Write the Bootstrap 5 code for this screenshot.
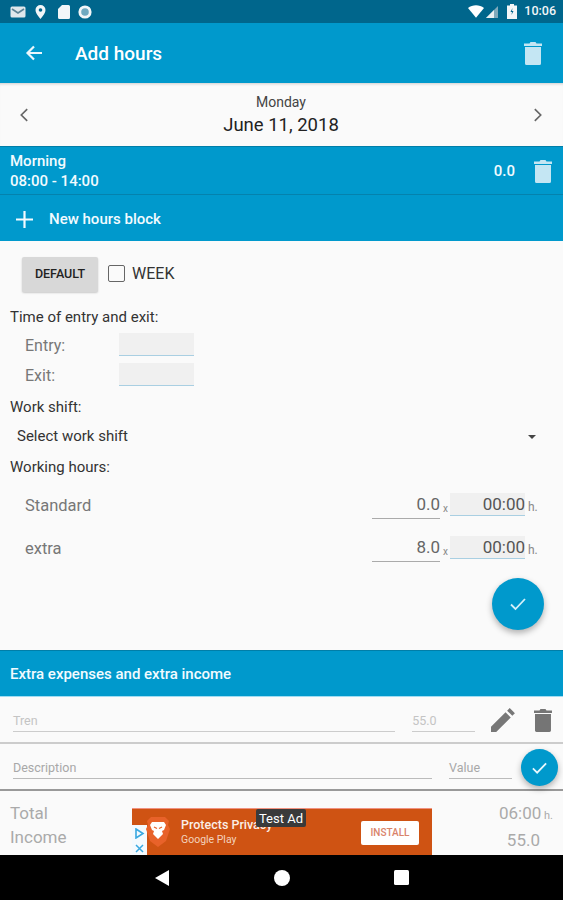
<!DOCTYPE html>
<html lang="en">
<head>
<meta charset="utf-8">
<title>Add hours</title>
<link href="https://cdn.jsdelivr.net/npm/bootstrap@5.3.0/dist/css/bootstrap.min.css" rel="stylesheet">
<style>
html,body{margin:0;background:#fafafa;}
body{font-family:Roboto,"Liberation Sans",sans-serif;color:#333;}
.screen{width:563px;height:900px;overflow:hidden;background:#fafafa;position:relative;}
.statusbar{height:23px;background:#00668c;color:#f2f6f8;padding:0 7px 0 10px;font-size:12.5px;font-weight:500;}
.statusbar svg{display:block;}
.left-icons{gap:9px;}
.ic-sd{margin-left:3px;}
.ic-dot{margin-left:-1px;}
.ic-signal{margin-left:2px;}
.ic-batt{margin-left:9px;}
.clock-text{margin-left:7px;}
.toolbar{height:60px;background:#0099cc;color:#fff;padding:0 21px 0 25px;}
.toolbar-title{font-size:19px;font-weight:500;margin-left:32px;margin-top:3px;}
.datebar{height:63px;padding:0 20px 0 19px;box-shadow:inset 0 3px 3px -2px rgba(0,0,0,.18);}
.day{font-size:14px;color:#444;line-height:16px;margin-top:2px;}
.date{font-size:18.5px;color:#222;line-height:24px;margin-top:3px;}
.band{background:#0099cc;color:#f2fbff;}
.band-block{height:49px;padding:0 11px 0 10px;border-top:1px solid #007ea8;border-bottom:1px solid #0482ad;}
.block-name{font-size:15px;line-height:20px;font-weight:500;}
.trash-block{margin-left:19px;}
.band-new{height:46px;padding:2px 0 0 15px;font-size:15px;font-weight:500;}
.new-label{margin-left:15px;}
.form-zone{height:409px;padding:16px 0 0 10px;position:relative;}
.default-btn{width:76px;height:35px;margin-left:12px;background:#d8d8d8;border:0;border-radius:2px;font-size:12.5px;font-weight:500;color:#222;padding:0;box-shadow:0 1px 2px rgba(0,0,0,.2);}
.week-box{width:17px;height:17px;border:1.5px solid #666;border-radius:2px;margin:-3px 0 0 10px;}
.week{font-size:16px;color:#333;margin:-2px 0 0 7px;}
.lab{font-size:15px;line-height:18px;color:#333;}
.lab-time{margin-top:16px;}
.lab-shift{margin-top:8px;}
.lab-hours{margin-top:6px;}
.time-row{height:30px;padding-left:15px;}
.time-row-first{margin-top:4px;}
.time-name{font-size:16px;color:#777;width:94px;margin-top:2px;}
.time-input{width:75px;height:23px;background:#f0f0f0;border-bottom:1.5px solid #a9cfe2;margin-top:-1px;}
.shift-row{height:31px;padding:0 27px 0 7px;font-size:15px;color:#333;margin-top:5px;}
.caret-down{width:0;height:0;border-left:4.5px solid transparent;border-right:4.5px solid transparent;border-top:4.5px solid #444;}
.hours-row{height:43px;padding:0 24px 0 15px;font-size:16.5px;color:#777;}
.hours-first{margin-top:8px;}
.hours-name{margin-top:2px;}
.num{width:68px;text-align:right;border-bottom:1.5px solid #aaa;color:#666;font-size:17px;line-height:22px;padding-bottom:3px;margin-top:1px;}
.mult{width:10px;font-size:10px;color:#888;padding-left:3px;padding-top:5px;}
.clock{width:75px;height:23px;background:#f0f0f0;border-bottom:1.5px solid #a9cfe2;text-align:right;font-size:17px;line-height:22px;color:#555;margin-top:-2px;}
.unit{width:14px;font-size:12px;color:#888;padding-left:3px;padding-top:3px;}
.fab{position:absolute;border-radius:50%;background:#0099cc;box-shadow:0 3px 6px rgba(0,0,0,.3);display:flex;align-items:center;justify-content:center;}
.fab-main{width:52px;height:52px;right:19px;top:337px;}
.band-extra{height:47px;padding:2px 0 0 10px;font-size:15px;font-weight:500;border-top:1px solid #007ea8;border-bottom:1px solid #9fdcf2;}
.entry-row{height:47px;padding:0 11px 0 13px;border-bottom:2px solid #ccc;font-size:12.5px;color:#c4c4c4;}
.entry-row-b{border-bottom-color:#999;color:#a8a8a8;position:relative;}
.field{border-bottom:1.5px solid #ccc;height:21px;line-height:19px;margin-top:3px;}
.entry-row-b .field{border-bottom-color:#bbb;}
.f-tren{width:383px;}
.f-val{width:63px;margin-left:17px;}
.f-desc{width:419px;}
.f-value{width:63px;margin-left:17px;}
.ic-pen{margin-left:16px;}
.ic-trash{margin-left:18px;}
.fab-small{width:37px;height:37px;right:5px;top:5px;}
.totals{height:64px;padding:10px 10px 0 10px;font-size:17px;line-height:24px;color:#aaa;}
.small-h{font-size:11px;}
.val-income{padding-right:13px;}
.navbar-sys{height:45px;background:#000;padding-left:155px;gap:105px;}
.nav-sq{margin-left:-1px;}
.ad{position:absolute;left:132px;top:808px;width:300px;height:47px;background:#cf5313;border-top:1px solid #f0917f;color:#fbeee6;}
.ad-choice{position:absolute;left:0;bottom:0;width:15px;height:30px;background:#f4fafe;}
.ad-logo{position:absolute;left:13px;top:7px;}
.ad-t1{position:absolute;left:49px;top:8px;font-size:12.5px;line-height:15px;font-weight:500;white-space:nowrap;}
.ad-t2{position:absolute;left:49px;top:23px;font-size:10.5px;line-height:15px;color:#f3d2bd;white-space:nowrap;}
.ad-install{position:absolute;left:229px;top:12px;width:58px;height:24px;background:#fff;border-radius:2px;color:#d9836a;font-size:10px;line-height:24px;text-align:center;font-weight:500;}
.ad-test{position:absolute;left:124px;top:0;width:50px;height:18px;background:#3a3a3a;border-radius:2px;color:#fff;font-size:13px;line-height:20px;text-align:center;}
</style>
</head>
<body>
<div class="screen">
  <div class="statusbar d-flex align-items-center justify-content-between">
    <div class="left-icons d-flex align-items-center">
      <svg width="16" height="12" viewBox="0 0 16 12"><rect width="15" height="11" x=".5" y=".5" rx="1.5" fill="#dfe8ec"/><path d="M2 3l6 4 6-4" fill="none" stroke="#5d8496" stroke-width="1.6"/></svg>
      <svg width="11" height="14" viewBox="0 0 11 14"><path d="M5.5 0a5 5 0 0 0-5 5c0 3.5 5 9 5 9s5-5.500 5-9a5 5 0 0 0-5-5z" fill="#f2f6f8"/><circle cx="5.500" cy="5" r="1.800" fill="#00668c"/></svg>
      <svg class="ic-sd" width="12" height="14" viewBox="0 0 12 14"><path d="M4 0h6.500A1.500 1.500 0 0 1 12 1.500v11a1.500 1.500 0 0 1-1.500 1.500h-9A1.500 1.500 0 0 1 0 12.500V4z" fill="#f2f6f8"/></svg>
      <svg class="ic-dot" width="14" height="14" viewBox="0 0 14 14"><circle cx="7" cy="7" r="5.200" fill="#6fa9c0" stroke="#f2f6f8" stroke-width="2.800"/></svg>
    </div>
    <div class="d-flex align-items-center">
      <svg width="16" height="13" viewBox="0 0 18 14"><path d="M0 3.200C5-1 13-1 18 3.200L9 14z" fill="#fff"/></svg>
      <svg class="ic-signal" width="12" height="12" viewBox="0 0 12 12"><path d="M12 0v12H0z" fill="#7fa9bb"/><path d="M8 4v8H0z" fill="#e8eff2"/></svg>
      <svg class="ic-batt" width="10" height="15" viewBox="0 0 10 15"><path d="M3 0h4v1.500h3V15H0V1.500h3z" fill="#f2f6f8"/><path d="M5.500 4L3.500 8h1.500l-.5 3 2-4H5z" fill="#00668c"/></svg>
      <span class="clock-text">10:06</span>
    </div>
  </div>

  <div class="toolbar d-flex align-items-center">
    <svg width="18" height="16" viewBox="0 0 18 16"><path d="M17 8H2.500M9 1.500L2.500 8 9 14.500" fill="none" stroke="#eaf7fc" stroke-width="2.200"/></svg>
    <div class="toolbar-title flex-grow-1">Add hours</div>
    <svg width="18" height="24" viewBox="0 0 18 24"><path d="M1 6h16v16.500a1.500 1.500 0 0 1-1.500 1.500h-13A1.500 1.500 0 0 1 1 22.500zM0 2.500h5.500L6.500 1h5l1 1.500H18V5H0z" fill="#c4e6f3"/></svg>
  </div>

  <div class="datebar d-flex align-items-center justify-content-between">
    <svg width="10" height="16" viewBox="0 0 11 16"><path d="M9 1.500L2.500 8 9 14.500" fill="none" stroke="#666" stroke-width="1.800"/></svg>
    <div class="text-center">
      <div class="day">Monday</div>
      <div class="date">June 11, 2018</div>
    </div>
    <svg width="10" height="16" viewBox="0 0 11 16"><path d="M2 1.500L8.500 8 2 14.500" fill="none" stroke="#666" stroke-width="1.800"/></svg>
  </div>

  <div class="band band-block d-flex justify-content-between align-items-center">
    <div>
      <div class="block-name">Morning</div>
      <div class="block-name">08:00 - 14:00</div>
    </div>
    <div class="d-flex align-items-center">
      <span class="block-name">0.0</span>
      <svg class="trash-block" width="18" height="24" viewBox="0 0 18 24"><path d="M1 6h16v16.500a1.500 1.500 0 0 1-1.500 1.500h-13A1.500 1.500 0 0 1 1 22.500zM0 2.500h5.500L6.500 1h5l1 1.500H18V5H0z" fill="#c4e6f3"/></svg>
    </div>
  </div>
  <div class="band band-new d-flex align-items-center">
    <svg width="19" height="19" viewBox="0 0 19 19"><path d="M9.500 1v17M1 9.500h17" stroke="#f2fbff" stroke-width="2.200"/></svg>
    <span class="new-label">New hours block</span>
  </div>

  <div class="form-zone">
    <div class="d-flex align-items-center">
      <button type="button" class="btn default-btn">DEFAULT</button>
      <span class="week-box"></span>
      <span class="week">WEEK</span>
    </div>
    <div class="lab lab-time">Time of entry and exit:</div>
    <div class="time-row time-row-first d-flex align-items-center">
      <span class="time-name">Entry:</span><span class="time-input"></span>
    </div>
    <div class="time-row d-flex align-items-center">
      <span class="time-name">Exit:</span><span class="time-input"></span>
    </div>
    <div class="lab lab-shift">Work shift:</div>
    <div class="shift-row d-flex align-items-center justify-content-between">
      <span>Select work shift</span><span class="caret-down"></span>
    </div>
    <div class="lab lab-hours">Working hours:</div>
    <div class="hours-row hours-first d-flex align-items-center">
      <span class="hours-name flex-grow-1">Standard</span>
      <span class="num">0.0</span><span class="mult">x</span><span class="clock">00:00</span><span class="unit">h.</span>
    </div>
    <div class="hours-row d-flex align-items-center">
      <span class="hours-name flex-grow-1">extra</span>
      <span class="num">8.0</span><span class="mult">x</span><span class="clock">00:00</span><span class="unit">h.</span>
    </div>
    <div class="fab fab-main">
      <svg width="18" height="14" viewBox="0 0 18 14"><path d="M2 7.500l4.500 4.500L16 2" fill="none" stroke="#d5f0fa" stroke-width="1.800"/></svg>
    </div>
  </div>

  <div class="band band-extra d-flex align-items-center">Extra expenses and extra income</div>

  <div class="entry-row d-flex align-items-center">
    <div class="field f-tren">Tren</div>
    <div class="field f-val">55.0</div>
    <svg class="ic-pen" width="25" height="25" viewBox="0 0 24 24"><path d="M0 24v-5L14 5l5 5L5 24zM15.500 3.500L18 1l5 5-2.500 2.500z" fill="#777"/></svg>
    <svg class="ic-trash" width="18" height="24" viewBox="0 0 18 24"><path d="M1 6h16v16.500a1.500 1.500 0 0 1-1.500 1.500h-13A1.500 1.500 0 0 1 1 22.500zM0 2.500h5.500L6.500 1h5l1 1.500H18V5H0z" fill="#757575"/></svg>
  </div>
  <div class="entry-row entry-row-b d-flex align-items-center">
    <div class="field f-desc">Description</div>
    <div class="field f-value">Value</div>
    <div class="fab fab-small">
      <svg width="17" height="14" viewBox="0 0 18 14"><path d="M2 7.500l4.500 4.500L16 2" fill="none" stroke="#e8f8fd" stroke-width="1.900"/></svg>
    </div>
  </div>

  <div class="totals d-flex justify-content-between">
    <div><div>Total</div><div>Income</div></div>
    <div class="text-end"><div>06:00<span class="small-h"> h.</span></div><div class="val-income">55.0</div></div>
  </div>

  <div class="navbar-sys d-flex align-items-center">
    <svg width="14" height="16" viewBox="0 0 14 16"><path d="M14 0v16L0 8z" fill="#fff"/></svg>
    <svg width="16" height="16" viewBox="0 0 16 16"><circle cx="8" cy="8" r="8" fill="#fff"/></svg>
    <svg class="nav-sq" width="15" height="15" viewBox="0 0 15 15"><rect width="15" height="15" rx="1.500" fill="#fff"/></svg>
  </div>

  <div class="ad">
    <div class="ad-choice d-flex flex-column align-items-center justify-content-around">
      <svg width="11" height="11" viewBox="0 0 11 11"><path d="M2 1l7 4.500L2 10z" fill="none" stroke="#39a8e0" stroke-width="1.600"/></svg>
      <svg width="9" height="9" viewBox="0 0 9 9"><path d="M1 1l7 7M8 1L1 8" stroke="#39a8e0" stroke-width="1.500"/></svg>
    </div>
    <svg class="ad-logo" width="26" height="32" viewBox="0 0 26 32"><path d="M6 1h14l4 4-1 4 2 4-4 12-8 6-8-6-4-12 2-4-1-4z" fill="#e8622a"/><path d="M7 6h12l2 3-2 5-2 1 1 3-5 5-5-5 1-3-2-1-2-5z" fill="#fff"/><path d="M9 11l3 1.500M17 11l-3 1.500" stroke="#e8622a" stroke-width="1.300"/></svg>
    <div class="ad-t1">Protects Privacy</div>
    <div class="ad-t2">Google Play</div>
    <div class="ad-install">INSTALL</div>
    <div class="ad-test">Test Ad</div>
  </div>
</div>
</body>
</html>
